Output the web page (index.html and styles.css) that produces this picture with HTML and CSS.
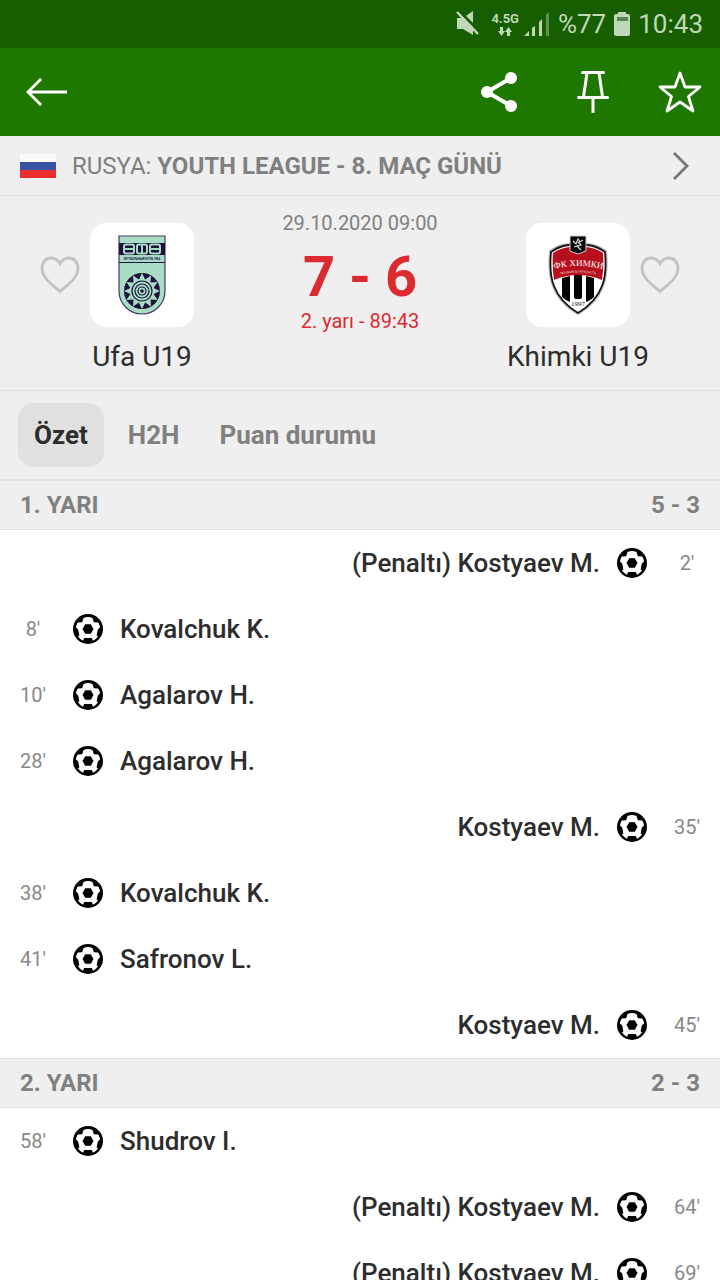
FILE: index.html
```html
<!DOCTYPE html>
<html lang="tr">
<head>
<meta charset="utf-8">
<meta name="viewport" content="width=device-width, initial-scale=1">
<title>Ufa U19 - Khimki U19</title>
<link rel="stylesheet" href="styles.css">
</head>
<body>
<svg class="defs" aria-hidden="true">
  <symbol id="ball" viewBox="0 0 30 30">
    <circle cx="15" cy="15" r="15" fill="#000"/>
    <path fill="#fff" d="M10.500 4 Q15 1.800 19.500 4 L20.800 8.200 L25.200 8.600 Q27.400 12 27 13.600 L24.800 15.400 L23.600 21.400 L25 22.200 Q23 25.400 20 26.700 L18.800 24 H11.200 L10 26.700 Q7 25.400 5 22.200 L6.400 21.400 L5.200 15.400 L3 13.600 Q2.600 12 4.800 8.600 L9.200 8.200 Z"/>
    <path fill="#000" d="M12.200 10.200 H17.800 L20.500 15 L17.800 19.800 H12.200 L9.500 15 Z"/>
  </symbol>
  <symbol id="heart" viewBox="0 0 40 38">
    <path d="M20 35.500 C14 30 2 22.500 2 12.500 C2 6 6.500 2 11.200 2 C15.500 2 18.200 4.600 20 7.600 C21.800 4.600 24.500 2 28.800 2 C33.500 2 38 6 38 12.500 C38 22.500 26 30 20 35.500 Z" fill="none" stroke="#c2c2c2" stroke-width="2.800"/>
  </symbol>
</svg>
<div class="app">
  <div class="status">
    <svg width="24" height="26" viewBox="0 0 24 26"><path fill="#c1d7ba" d="M1 7H7L17 0V24L7 18H1Z"/><path d="M3 0L24 21" stroke="#175e00" stroke-width="3"/><path d="M1 1L22 23" stroke="#c1d7ba" stroke-width="2.500"/></svg>
    <div class="network"><span>4.5G</span>
      <svg width="14" height="9" viewBox="0 0 14 9"><path fill="#c1d7ba" d="M2 0H5V4H7L3.500 9L0 4H2ZM9 9H12V5H14L10.500 0L7 5H9Z"/></svg>
    </div>
    <svg width="26" height="24" viewBox="0 0 26 24"><path fill="#c1d7ba" d="M0 24L5 19V24ZM8 16L11 14V24H8ZM15 10L18 7V24H15Z"/><path fill="#5f9150" d="M22 3L25 0V24H22Z"/></svg>
    <span class="percent">%77</span>
    <svg width="16" height="24" viewBox="0 0 16 24"><path fill="#c1d7ba" d="M4 0H12V2H14Q16 2 16 4V22Q16 24 14 24H2Q0 24 0 22V4Q0 2 2 2H4Z"/><path fill="#55874a" d="M3 5H14V9H3Z"/></svg>
    <span class="clock">10:43</span>
  </div>
  <header class="appbar">
    <button class="icon-btn back" aria-label="Geri"><svg width="42" height="30" viewBox="0 0 42 30"><path d="M15 2L2 15L15 28M2 15H41" fill="none" stroke="#fff" stroke-width="2.800"/></svg></button>
    <button class="icon-btn" aria-label="Paylaş"><svg width="38" height="42" viewBox="0 0 38 42"><path d="M31 7L7 21L31 35" fill="none" stroke="#fff" stroke-width="4"/><g fill="#fff"><circle cx="31" cy="7" r="6"/><circle cx="7" cy="21" r="6"/><circle cx="31" cy="35" r="6"/></g></svg></button>
    <button class="icon-btn" aria-label="Sabitle"><svg width="32" height="42" viewBox="0 0 32 42"><path d="M5.500 1.500H26.500M10 2L6.500 26M22 2L25.500 26M1.500 26.500H30.500M16 27V41" fill="none" stroke="#fff" stroke-width="3" stroke-linecap="round"/></svg></button>
    <button class="icon-btn star" aria-label="Favorilere ekle"><svg width="44" height="44" viewBox="0 0 44 44"><path d="M22 3L27 17H42L30.500 26.500L35 41L22 32L9 41L13.500 26.500L2 17H17Z" fill="none" stroke="#fff" stroke-width="2.800" stroke-linejoin="round"/></svg></button>
  </header>
  <a class="league" href="#league">
    <svg width="36" height="24" viewBox="0 0 36 24"><path fill="#fafafa" d="M0 0H36V8H0Z"/><path fill="#3a54a5" d="M0 8H36V16H0Z"/><path fill="#ee2f32" d="M0 16H36V24H0Z"/></svg>
    <span class="league-name">RUSYA: <b>YOUTH LEAGUE - 8. MAÇ GÜNÜ</b></span>
    <svg width="18" height="30" viewBox="0 0 18 30"><path d="M2 2L15 15L2 28" fill="none" stroke="#777" stroke-width="2.800"/></svg>
  </a>
  <section class="match">
    <div class="team">
      <button class="heart" aria-label="Ufa U19 favori"><svg width="40" height="38"><use href="#heart"/></svg></button>
      <div class="crest">
        <svg width="48" height="80" viewBox="0 0 48 80">
          <path d="M1 1H47V56A23 23 0 0 1 1 56Z" fill="#a9dcc5" stroke="#443b64" stroke-width="1.200"/>
          <path d="M1 8H47V20H1Z" fill="#21113f"/>
          <path d="M1 27.500H47" stroke="#21113f"/>
          <g fill="none" stroke="#a9dcc5" stroke-width="2"><rect x="6" y="9.500" width="10" height="9" rx="2"/><path d="M6 14H16M24 9V19"/><rect x="19" y="9.500" width="10" height="9" rx="2"/><rect x="32" y="9.500" width="10" height="9" rx="2"/><path d="M32 14H42"/></g>
          <text x="24" y="25" class="ufa-text">ФУТБОЛЬНЫЙ КЛУБ УФА</text>
          <circle cx="24" cy="56" r="18" fill="#21113f"/>
          <path fill="#a9dcc5" d="M24 38L27.100 44.400L33 40.400L32.500 47.500L39.600 47L35.600 52.900L42 56L35.600 59.100L39.600 65L32.500 64.500L33 71.600L27.100 67.600L24 74L20.900 67.600L15 71.600L15.500 64.500L8.400 65L12.400 59.100L6 56L12.400 52.900L8.400 47L15.500 47.500L15 40.400L20.900 44.400Z"/>
          <g fill="none" stroke="#21113f" stroke-width="1.200"><circle cx="24" cy="56" r="10"/><circle cx="24" cy="56" r="7"/><circle cx="24" cy="56" r="4"/></g><circle cx="24" cy="56" r="1.800" fill="#21113f"/>
        </svg>
      </div>
      <div class="team-name">Ufa U19</div>
    </div>
    <div class="result">
      <div class="date">29.10.2020 09:00</div>
      <div class="score">7 - 6</div>
      <div class="period">2. yarı - 89:43</div>
    </div>
    <div class="team">
      <button class="heart away-heart" aria-label="Khimki U19 favori"><svg width="40" height="38"><use href="#heart"/></svg></button>
      <div class="crest">
        <svg width="60" height="80" viewBox="0 0 60 80">
          <path d="M21 9Q10 10 2 16Q0 39 5 51Q11 68 30 79Q49 68 55 51Q60 39 58 16Q50 10 39 9Z" fill="#fff" stroke="#bbb" stroke-width="2"/>
          <path d="M21 10Q11 11 3 17Q1 39 6 51Q12 67 30 78Q48 67 54 51Q59 39 57 17Q49 11 39 10Z" fill="#fff" stroke="#161616" stroke-width="1.800"/>
          <path d="M22 12Q12 13 5 18Q4 32 6 45Q30 35 54 45Q56 32 55 18Q48 13 38 12Z" fill="#b70f1d"/>
          <path d="M14 43L22 41V67Q17 65 14 62ZM26 40H34V62Q34 64 32 64H28Q26 64 26 62ZM38 41L46 43V62Q42 66 38 67Z" fill="#050505"/>
          <path d="M22 1H38V16L30 19L22 16Z" fill="#080808" stroke="#ccc"/>
          <path d="M25 6L28 9L30 4L32 7L35 5M30 7L33 10L29 11L33 15M29 11L26 12" fill="none" stroke="#ddd" stroke-width="1.200"/>
          <path id="khimki-arc" d="M3 35Q30 27 58 35" fill="none"/><path id="region-arc" d="M5 41Q30 34 55 41" fill="none"/>
          <text class="khimki-text"><textPath href="#khimki-arc" startOffset="50%">ФК ХИМКИ</textPath></text>
          <text class="region-text"><textPath href="#region-arc" startOffset="50%">МОСКОВСКАЯ ОБЛАСТЬ</textPath></text>
          <text x="30" y="71" class="year-text">1997</text>
        </svg>
      </div>
      <div class="team-name">Khimki U19</div>
    </div>
  </section>
  <nav class="tabs">
    <button class="tab active">Özet</button><button class="tab">H2H</button><button class="tab">Puan durumu</button>
  </nav>
  <main class="events">
    <h2 class="half"><span>1. YARI</span><span>5 - 3</span></h2>
    <div class="event away"><span class="minute">2'</span><svg class="ball"><use href="#ball"/></svg><span class="player">(Penaltı) Kostyaev M.</span></div>
    <div class="event"><span class="minute">8'</span><svg class="ball"><use href="#ball"/></svg><span class="player">Kovalchuk K.</span></div>
    <div class="event"><span class="minute">10'</span><svg class="ball"><use href="#ball"/></svg><span class="player">Agalarov H.</span></div>
    <div class="event"><span class="minute">28'</span><svg class="ball"><use href="#ball"/></svg><span class="player">Agalarov H.</span></div>
    <div class="event away"><span class="minute">35'</span><svg class="ball"><use href="#ball"/></svg><span class="player">Kostyaev M.</span></div>
    <div class="event"><span class="minute">38'</span><svg class="ball"><use href="#ball"/></svg><span class="player">Kovalchuk K.</span></div>
    <div class="event"><span class="minute">41'</span><svg class="ball"><use href="#ball"/></svg><span class="player">Safronov L.</span></div>
    <div class="event away"><span class="minute">45'</span><svg class="ball"><use href="#ball"/></svg><span class="player">Kostyaev M.</span></div>
    <h2 class="half second"><span>2. YARI</span><span>2 - 3</span></h2>
    <div class="event"><span class="minute">58'</span><svg class="ball"><use href="#ball"/></svg><span class="player">Shudrov I.</span></div>
    <div class="event away"><span class="minute">64'</span><svg class="ball"><use href="#ball"/></svg><span class="player">(Penaltı) Kostyaev M.</span></div>
    <div class="event away"><span class="minute">69'</span><svg class="ball"><use href="#ball"/></svg><span class="player">(Penaltı) Kostyaev M.</span></div>
  </main>
</div>
</body>
</html>
```
FILE: styles.css
```css
* { box-sizing: border-box; }
body { margin: 0; background: #fff; color: #2d2d2d; font-family: Roboto, "Liberation Sans", sans-serif; }
button { border: 0; padding: 0; background: none; font: inherit; color: inherit; cursor: pointer; }
svg { display: block; flex: none; }
.defs { position: absolute; width: 0; height: 0; }
.app { display: flex; flex-direction: column; height: 100vh; overflow: hidden; }
.app > * { flex: none; }

.status { display: flex; align-items: center; justify-content: flex-end; height: 48px; padding-right: 17px; background: #175e00; color: #c1d7ba; font-size: 26px; }
.network { display: flex; flex-direction: column; align-items: center; gap: 1px; margin: 0 5px 0 11px; font-size: 13px; font-weight: 700; line-height: 14px; }
.percent { margin: 0 8px; }
.clock { margin-left: 8px; }

.appbar { display: flex; height: 88px; background: #1e7800; }
.icon-btn { display: flex; align-items: center; justify-content: center; width: 94px; height: 88px; }
.back { margin-right: auto; }
.star { width: 80px; }

.league { display: flex; align-items: center; gap: 16px; height: 60px; padding: 0 30px 0 20px; background: #efefef; border-bottom: 1px solid #dedede; color: #808080; font-size: 24px; text-decoration: none; }
.league-name { flex: 1; white-space: nowrap; }

.match { display: flex; padding: 0 40px; background: #efefef; border-bottom: 1px solid #dedede; }
.team { display: grid; grid-template-columns: 40px 104px 40px; column-gap: 10px; row-gap: 12px; align-items: center; padding: 27px 0 15px; }
.heart { grid-row: 1; grid-column: 1; }
.away-heart { grid-column: 3; }
.crest { grid-row: 1; grid-column: 2; display: flex; align-items: center; justify-content: center; height: 104px; border-radius: 16px; background: #fff; }
.team-name { grid-column: 1 / -1; text-align: center; font-size: 28px; line-height: 36px; }
.result { flex: 1; padding-top: 15px; text-align: center; white-space: nowrap; color: #db2b30; font-size: 20px; line-height: 24px; }
.date { color: #808080; }
.score { margin-top: 10px; font-size: 56px; font-weight: 700; line-height: 64px; }
.ufa-text { font-size: 3px; font-weight: 700; text-anchor: middle; fill: #21113f; }
.khimki-text, .region-text, .year-text { font-family: "Liberation Serif", serif; text-anchor: middle; fill: #fff; }
.khimki-text { font-size: 9px; }
.region-text { font-size: 3px; }
.year-text { font-size: 7px; fill: #111; }

.tabs { display: flex; align-items: center; gap: 8px; height: 90px; padding: 0 18px; background: #efefef; border-bottom: 2px solid #e0e0e0; color: #808080; }
.tab { height: 64px; padding: 0 16px; border-radius: 16px; font-size: 26px; font-weight: 700; }
.active { background: #e0e0e0; color: #2d2d2d; }

.events { flex: 1; min-height: 0; overflow: hidden auto; scrollbar-width: none; }
.half { display: flex; align-items: center; justify-content: space-between; height: 49px; margin: 0; padding: 0 20px; background: #efefef; border-bottom: 1px solid #dedede; color: #808080; font-size: 24px; font-weight: 700; }
.second { height: 50px; border-top: 1px solid #dedede; }
.event { display: flex; align-items: center; height: 66px; }
.away { flex-direction: row-reverse; }
.minute { width: 66px; text-align: center; color: #888; font-size: 20px; }
.ball { width: 30px; height: 30px; margin: 0 17px 0 7px; }
.away .ball { margin: 0 7px 0 17px; }
.player { font-size: 26px; font-weight: 500; }
```
